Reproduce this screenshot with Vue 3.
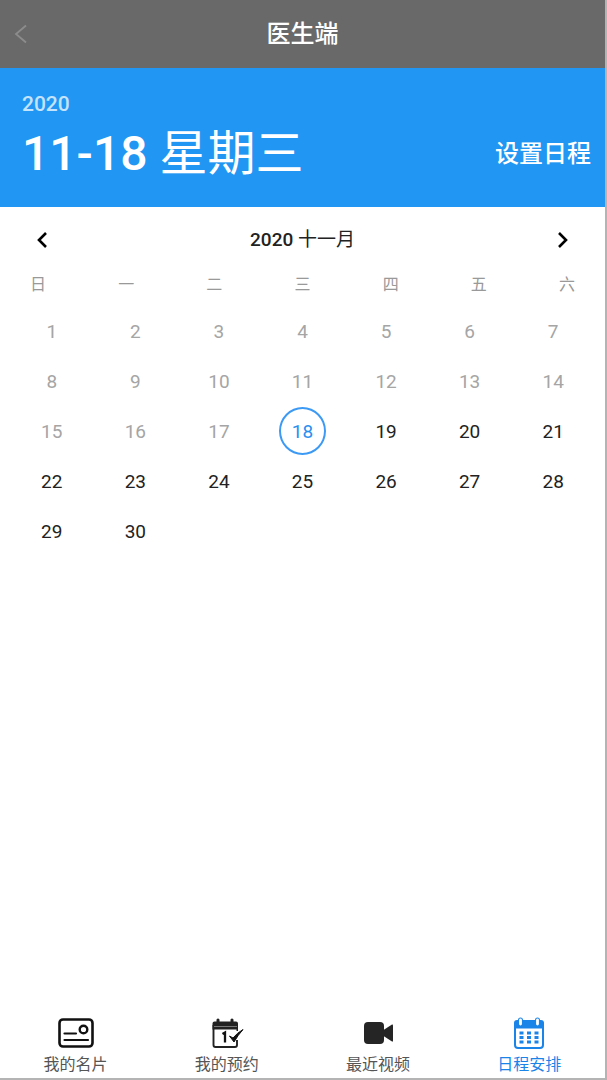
<script setup>
import { ref } from 'vue'

const weekdays = ['日', '一', '二', '三', '四', '五', '六']
const today = 18
const selected = ref(today)
const days = Array.from({ length: 30 }, (_, i) => i + 1)

const tabs = [
  { id: 'card', label: '我的名片' },
  { id: 'booking', label: '我的预约' },
  { id: 'video', label: '最近视频' },
  { id: 'schedule', label: '日程安排' }
]
const activeTab = ref('schedule')
</script>

<template>
  <div class="screen">
    <header class="topbar">
      <button class="back" type="button" aria-label="返回">
        <svg width="14" height="20" viewBox="0 0 14 20">
          <path d="M12 1.5 L2 10 L12 18.5" fill="none" stroke="#8c8c8c" stroke-width="1.8" />
        </svg>
      </button>
      <h1 class="title">医生端</h1>
    </header>

    <section class="banner">
      <div class="today">
        <p class="year">2020</p>
        <p class="date">11-18 <span class="han">星期三</span></p>
      </div>
      <button class="set" type="button">设置日程</button>
    </section>

    <main class="calendar">
      <div class="month">
        <button class="arrow" type="button" aria-label="上个月">
          <svg width="12" height="18" viewBox="0 0 12 18">
            <path d="M10 2 L3 9 L10 16" fill="none" stroke="#000" stroke-width="2.6" />
          </svg>
        </button>
        <h2 class="month-name">2020 <span class="han">十一月</span></h2>
        <button class="arrow" type="button" aria-label="下个月">
          <svg width="12" height="18" viewBox="0 0 12 18">
            <path d="M2 2 L9 9 L2 16" fill="none" stroke="#000" stroke-width="2.6" />
          </svg>
        </button>
      </div>
      <div class="weekdays">
        <span v-for="w in weekdays" :key="w">{{ w }}</span>
      </div>
      <div class="days">
        <button
          v-for="d in days"
          :key="d"
          type="button"
          class="day"
          :class="{ past: d < today, selected: d === selected }"
          @click="selected = d"
        >{{ d }}</button>
      </div>
    </main>

    <nav class="tabs">
      <button
        v-for="t in tabs"
        :key="t.id"
        type="button"
        class="tab"
        :class="{ active: t.id === activeTab }"
        @click="activeTab = t.id"
      >
        <svg v-if="t.id === 'card'" class="icon" viewBox="0 0 36 32">
          <rect x="1.5" y="2.5" width="33" height="27" rx="3.5" fill="none" stroke="#111" stroke-width="2.6" />
          <circle cx="25.5" cy="12.5" r="3.8" fill="none" stroke="#111" stroke-width="2.4" />
          <path d="M6.5 16.500 H18 M6.5 23 H30" fill="none" stroke="#111" stroke-width="2.2" stroke-linecap="round" />
        </svg>
        <svg v-else-if="t.id === 'booking'" class="icon" viewBox="0 0 36 32">
          <path d="M4.500 8 V28 Q4.500 30 6.500 30 H26 Q28 30 28 28 V23" fill="none" stroke="#222" stroke-width="1.9" />
          <path d="M3.5 12.5 V6.5 Q3.5 4.500 5.5 4.500 H7.5 V2.5 Q9 .5 10.5 2.5 V4.500 H21.5 V2.5 Q23 .5 24.500 2.5 V4.500 H27 Q29 4.500 29 6.5 V14 H27.5 V12.5 Z" fill="#222" />
          <path d="M5 9.5 H28" stroke="#777" stroke-width="1" />
          <path d="M13.5 17 L16 15.5 V25.5" fill="none" stroke="#111" stroke-width="2.3" />
          <path d="M20.5 19 L24 21 Q28 16 34 12.5 Q29 18 25 25 Z" fill="#111" stroke="#111" stroke-width="1" stroke-linejoin="round" />
        </svg>
        <svg v-else-if="t.id === 'video'" class="icon" viewBox="0 0 36 32">
          <rect x="4" y="5" width="20" height="22" rx="4" fill="#252525" />
          <path d="M22 14 L32 7.5 Q33 7 33 8.5 V23.5 Q33 25 32 24.5 L22 18 Z" fill="#252525" />
        </svg>
        <svg v-else class="icon" viewBox="0 0 36 32">
          <rect x="4" y="5" width="28" height="26" rx="3" fill="none" stroke="#1b84e8" stroke-width="2" />
          <path d="M3 11.5 V6 Q3 3 6 3 H30 Q33 3 33 6 V11.5 Z" fill="#1b84e8" />
          <path d="M9.5 3 V7 M26.500 3 V7" stroke="#1b84e8" stroke-width="5" stroke-linecap="round" />
          <path d="M9.5 3 V7 M26.500 3 V7" stroke="#fff" stroke-width="2.8" stroke-linecap="round" />
          <path d="M8.5 16 H12.5 M16 16 H20 M23.5 16 H27.5 M8.5 20.500 H12.5 M16 20.500 H20 M23.5 20.500 H27.5 M8.5 25 H12.5 M16 25 H20 M23.5 25 H27.5" stroke="#1b84e8" stroke-width="2.8" />
        </svg>
        <span>{{ t.label }}</span>
      </button>
    </nav>
  </div>
</template>

<style>
body {
  margin: 0;
}
</style>

<style scoped>
.screen {
  box-sizing: border-box;
  min-height: 100vh;
  display: flex;
  flex-direction: column;
  background: #fff;
  border-right: 2px solid #b4b4b4;
  border-bottom: 2px solid #b4b4b4;
  font-family: Roboto, "Noto Sans CJK SC", sans-serif;
}
button {
  margin: 0;
  padding: 0;
  border: 0;
  background: none;
  font: inherit;
  color: inherit;
  cursor: pointer;
}
svg {
  display: block;
}
h1,
h2,
p {
  margin: 0;
}
.han {
  font-weight: 400;
}
.topbar {
  display: grid;
  grid-template-columns: 48px 1fr 48px;
  align-items: center;
  height: 68px;
  background: #696969;
  color: #fff;
}
.back {
  padding-left: 14px;
}
.title {
  text-align: center;
  font-size: 24px;
  line-height: 34px;
  font-weight: 500;
}
.banner {
  display: flex;
  justify-content: space-between;
  align-items: center;
  box-sizing: border-box;
  height: 139px;
  padding: 8px 14px 0 22px;
  background: #2196f3;
  color: #fff;
}
.year {
  font-size: 21px;
  line-height: 24px;
  font-weight: 500;
  color: #c4e3fc;
}
.date {
  font-size: 48px;
  line-height: 76px;
  font-weight: 500;
}
.set {
  padding-top: 24px;
  font-size: 24px;
  line-height: 32px;
  font-weight: 500;
}
.calendar {
  flex: 1;
}
.month {
  display: flex;
  justify-content: space-between;
  align-items: center;
  height: 66px;
  padding: 0 36px;
}
.month-name {
  font-size: 19px;
  line-height: 24px;
  font-weight: 500;
  color: #222;
}
.weekdays {
  display: flex;
  justify-content: space-between;
  padding: 0 30px;
  font-size: 16px;
  line-height: 24px;
  color: #999;
}
.days {
  display: grid;
  grid-template-columns: repeat(7, 1fr);
  grid-auto-rows: 50px;
  align-items: center;
  justify-items: center;
  padding: 9px 10px 0;
}
.day {
  box-sizing: border-box;
  width: 47px;
  height: 48px;
  border-radius: 50%;
  font-size: 19px;
  color: #222;
}
.day.past {
  color: #a5a5a5;
}
.day.selected {
  border: 2px solid #3c9af5;
  color: #2a8ff0;
}
.tabs {
  display: grid;
  grid-template-columns: repeat(4, 1fr);
  padding-bottom: 1px;
}
.tab {
  display: flex;
  flex-direction: column;
  align-items: center;
  gap: 4px;
  font-size: 16px;
  line-height: 24px;
  color: #555;
}
.tab.active {
  color: #1b84e8;
}
.icon {
  width: 36px;
  height: 32px;
}
</style>
